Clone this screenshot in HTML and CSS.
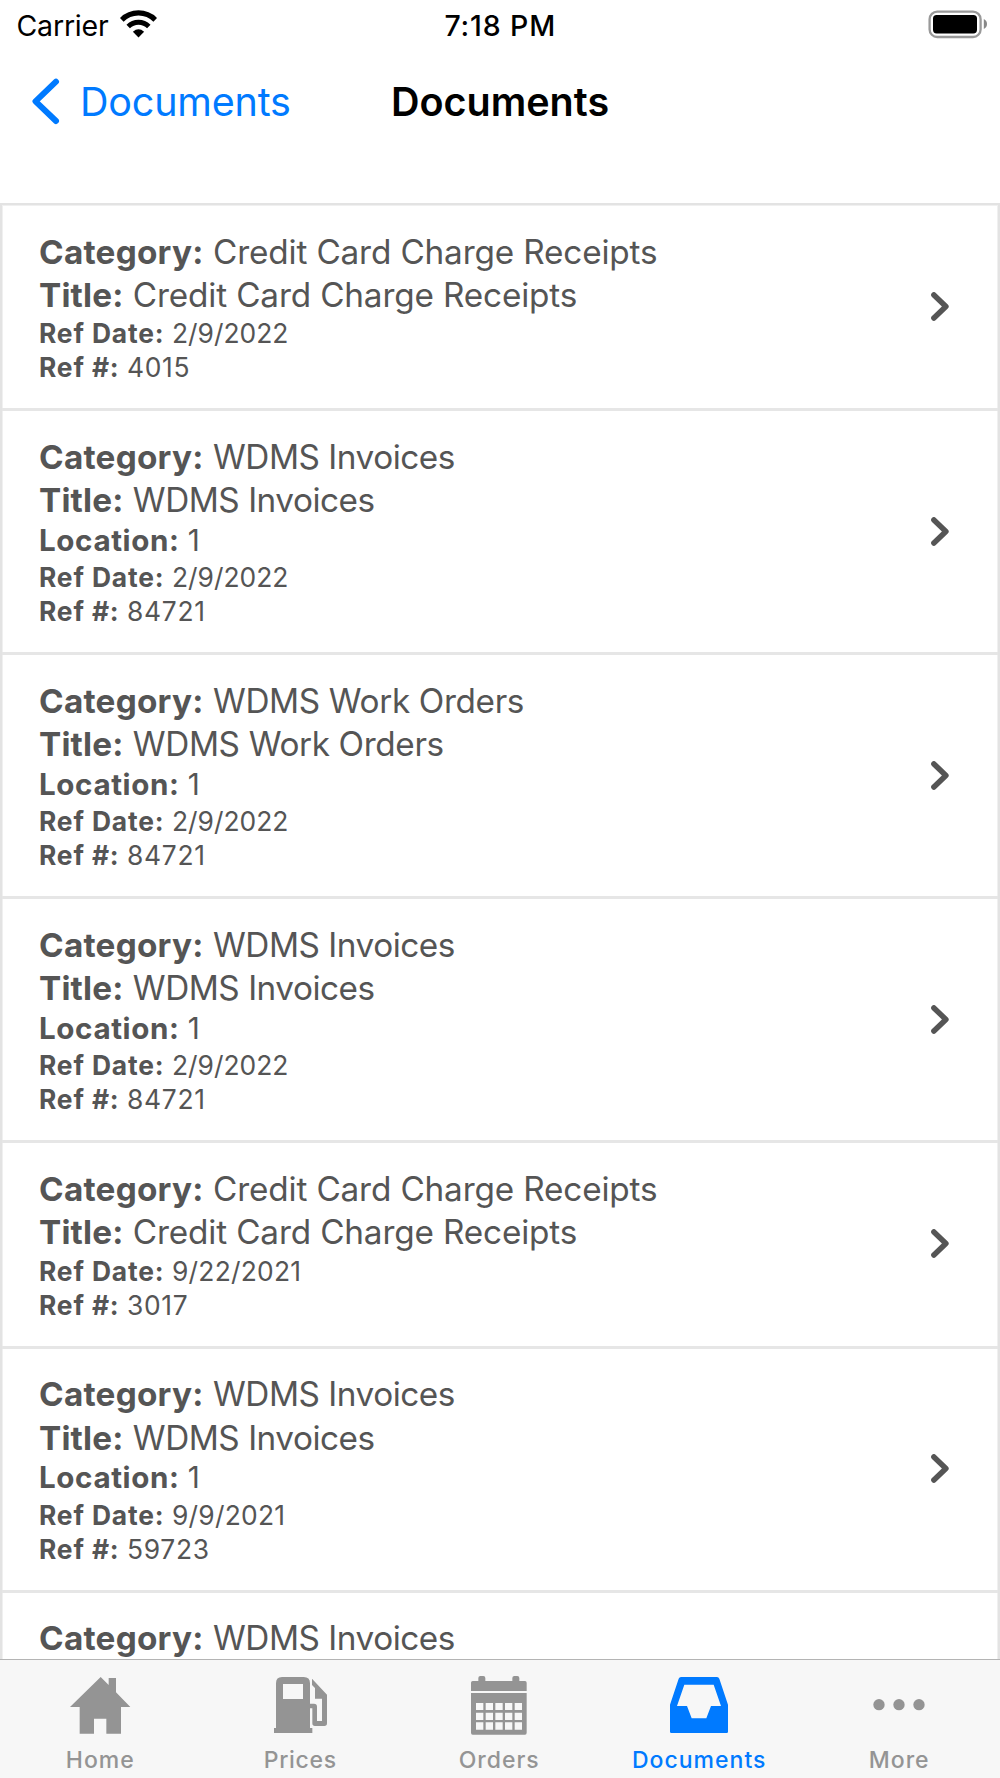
FILE: index.html
```html
<!DOCTYPE html>
<html lang="en">
<head>
<meta charset="utf-8">
<title>Documents</title>
<link rel="stylesheet" href="styles.css">
</head>
<body>
<svg class="defs" aria-hidden="true"><symbol id="chevron" viewBox="0 0 18 29"><path d="M2.9 2.9L14.9 14.4L2.9 26" fill="none" stroke="currentColor" stroke-width="5.5" stroke-linecap="round" stroke-linejoin="round"/></symbol></svg>
<div class="app">
  <header class="status">
    <div class="carrier">
      <span class="carrier-name">Carrier</span>
      <svg class="wifi" viewBox="120 8.5 37 29" width="37" height="29"><g fill="none" stroke="#000"><path d="M121.8 19.3A23.8 23.8 0 0 1 155.2 19.3" stroke-width="5.2"/><path d="M128.2 25.9A14.7 14.7 0 0 1 148.8 25.9" stroke-width="4.9"/></g><path d="M138.5 37L132.9 31.3Q138.5 26.4 144.1 31.3Z"/></svg>
    </div>
    <div class="time">7:18 PM</div>
    <svg class="battery" viewBox="928 9 60 30" width="60" height="30"><rect x="929.6" y="11.6" width="51" height="25.4" rx="7.6" fill="none" stroke="#999" stroke-width="2.3"/><rect x="933" y="15" width="44" height="18.4" rx="3.6"/><path d="M983.8 19Q987 20.6 987 24T983.8 29Z" fill="#888"/></svg>
  </header>
  <nav class="nav">
    <a class="back"><svg viewBox="32 78 28 47" width="28" height="47"><path d="M56 81.7L35.5 101.3L56 121" fill="none" stroke="currentColor" stroke-width="6" stroke-linecap="round" stroke-linejoin="round"/></svg><span>Documents</span></a>
    <h1 class="title">Documents</h1>
  </nav>
  <main class="list">
    <article class="row">
      <div class="info">
        <p class="main"><b>Category:</b> <span class="receipts">Credit Card Charge Receipts</span></p>
        <p class="main"><b class="short">Title:</b> <span class="receipts">Credit Card Charge Receipts</span></p>
        <p class="ref"><b>Ref Date:</b> <span class="date">2/9/2022</span></p>
        <p class="ref"><b>Ref #:</b> <span>4015</span></p>
      </div>
      <svg class="chev"><use href="#chevron"/></svg>
    </article>
    <article class="row">
      <div class="info">
        <p class="main"><b>Category:</b> <span>WDMS Invoices</span></p>
        <p class="main"><b class="short">Title:</b> <span>WDMS Invoices</span></p>
        <p class="loc"><b>Location:</b> <span>1</span></p>
        <p class="ref"><b>Ref Date:</b> <span class="date">2/9/2022</span></p>
        <p class="ref"><b>Ref #:</b> <span>84721</span></p>
      </div>
      <svg class="chev"><use href="#chevron"/></svg>
    </article>
    <article class="row">
      <div class="info">
        <p class="main"><b>Category:</b> <span class="orders">WDMS Work Orders</span></p>
        <p class="main"><b class="short">Title:</b> <span class="orders">WDMS Work Orders</span></p>
        <p class="loc"><b>Location:</b> <span>1</span></p>
        <p class="ref"><b>Ref Date:</b> <span class="date">2/9/2022</span></p>
        <p class="ref"><b>Ref #:</b> <span>84721</span></p>
      </div>
      <svg class="chev"><use href="#chevron"/></svg>
    </article>
    <article class="row">
      <div class="info">
        <p class="main"><b>Category:</b> <span>WDMS Invoices</span></p>
        <p class="main"><b class="short">Title:</b> <span>WDMS Invoices</span></p>
        <p class="loc"><b>Location:</b> <span>1</span></p>
        <p class="ref"><b>Ref Date:</b> <span class="date">2/9/2022</span></p>
        <p class="ref"><b>Ref #:</b> <span>84721</span></p>
      </div>
      <svg class="chev"><use href="#chevron"/></svg>
    </article>
    <article class="row">
      <div class="info">
        <p class="main"><b>Category:</b> <span class="receipts">Credit Card Charge Receipts</span></p>
        <p class="main"><b class="short">Title:</b> <span class="receipts">Credit Card Charge Receipts</span></p>
        <p class="ref"><b>Ref Date:</b> <span class="date-2021">9/22/2021</span></p>
        <p class="ref"><b>Ref #:</b> <span>3017</span></p>
      </div>
      <svg class="chev"><use href="#chevron"/></svg>
    </article>
    <article class="row">
      <div class="info">
        <p class="main"><b>Category:</b> <span>WDMS Invoices</span></p>
        <p class="main"><b class="short">Title:</b> <span>WDMS Invoices</span></p>
        <p class="loc"><b>Location:</b> <span>1</span></p>
        <p class="ref"><b>Ref Date:</b> <span class="date-2021">9/9/2021</span></p>
        <p class="ref"><b>Ref #:</b> <span>59723</span></p>
      </div>
      <svg class="chev"><use href="#chevron"/></svg>
    </article>
    <article class="row">
      <div class="info">
        <p class="main"><b>Category:</b> <span>WDMS Invoices</span></p>
      </div>
    </article>
  </main>
  <footer class="tabs">
    <a class="tab"><svg viewBox="192 282 216 192"><path d="M302 291L326 315V294H348V337L391 381H363V461H319V416H282V461H239V381H210Z"/></svg><span>Home</span></a>
    <a class="tab"><svg viewBox="792 282 216 192"><path fill-rule="evenodd" d="M828 310Q828 291 846 291H911Q930 291 930 310V371H942Q951 371 951 380V423H966V356H945V324L936 315V296L981 344V430Q981 438 973 438H945Q937 438 937 430V385H930V444H937V459H822V444H828ZM849 312V357H909V312Z"/></svg><span class="prices">Prices</span></a>
    <a class="tab"><svg viewBox="342 282 216 192"><path fill-rule="evenodd" d="M363 333V308Q363 303 368 303H385V294Q385 288 391 288H400Q406 288 406 294V303H487V294Q487 288 493 288H502Q508 288 508 294V303H525Q530 303 530 308V333ZM363 339H530V458Q530 464 525 464H368Q363 464 363 458ZM378 369V390H400V369ZM407 369V390H429V369ZM436 369V390H458V369ZM465 369V390H487V369ZM494 369V390H516V369ZM378 398V420H400V398ZM407 398V420H429V398ZM436 398V420H458V398ZM465 398V420H487V398ZM494 398V420H516V398ZM378 427V449H400V427ZM407 427V449H429V427ZM436 427V449H458V427ZM465 427V449H487V427ZM494 427V449H516V427Z"/></svg><span class="offset">Orders</span></a>
    <a class="tab active"><svg viewBox="192 282 216 192"><path fill-rule="evenodd" d="M243 291H351Q356 291 358 296L384 374V455Q384 459 380 459H214Q210 459 210 455V374L236 296Q238 291 243 291ZM253 314L231 378H261L275 415H319L333 378H363L341 314Z"/></svg><span class="offset">Documents</span></a>
    <a class="tab"><svg viewBox="792 282 216 192"><circle cx="837" cy="374" r="17"/><circle cx="897" cy="374" r="17"/><circle cx="957" cy="374" r="17"/></svg><span class="offset">More</span></a>
  </footer>
</div>
</body>
</html>
```
FILE: styles.css
```css
* { box-sizing: border-box; }
body { margin: 0; background: #fff; font-family: Inter, "Liberation Sans", sans-serif; }
.defs { display: none; }
.app { display: flex; flex-direction: column; width: 1000px; height: 1778px; overflow: hidden; }

.status { display: grid; grid-template-columns: 1fr auto 1fr; align-items: start; height: 56px; padding: 9px 12px 0 16.5px; font-size: 28.5px; line-height: 33px; }
.carrier { display: flex; gap: 11px; }
.carrier-name { letter-spacing: -.2px; }
.time { font-weight: 500; letter-spacing: .85px; margin-right: 4px; }
.battery { justify-self: end; }

.nav { display: grid; grid-template-columns: 1fr auto 1fr; align-items: center; height: 92px; padding: 0 32px; font-size: 39.5px; line-height: 48px; }
.back { display: flex; align-items: center; gap: 20px; color: #007aff; letter-spacing: -.2px; }
.back svg { margin-bottom: 2px; }
.title { margin: 0; font-size: inherit; font-weight: 600; }

.list { flex: 1; min-height: 0; margin-top: 55px; overflow: hidden; border: 2px solid #e3e3e3; border-bottom: 0; box-shadow: inset 1px 1px #f0f0f0, inset -1px 0 #f0f0f0; }
.row { display: flex; justify-content: space-between; align-items: center; padding: 25.9px 49px 24px 37px; color: #555; }
.row + .row { border-top: 3px solid #e6e6e6; padding-top: 24.9px; }
.info p { margin: 0; white-space: nowrap; }
.main { font-size: 33.3px; line-height: 43.3px; }
.main b { letter-spacing: .25px; }
.main .short { letter-spacing: .15px; }
.main span { letter-spacing: -.46px; }
.main .orders { letter-spacing: -.36px; }
.main .receipts { letter-spacing: -.15px; }
.info .main + .loc, .info .main + .ref { margin-top: -1.2px; }
.loc { font-size: 29.6px; line-height: 37.1px; padding-bottom: 1.6px; }
.loc b { letter-spacing: .6px; }
.ref { font-size: 26.4px; line-height: 34px; }
.ref b { letter-spacing: .85px; }
.ref span { letter-spacing: .7px; }
.ref .date { letter-spacing: 0; }
.ref .date-2021 { letter-spacing: .25px; }
.chev { width: 18px; height: 29px; margin-bottom: 2px; }

.tabs { display: grid; grid-template-columns: repeat(5, 1fr); height: 119px; border-top: 1px solid #b4b4b4; background: #f7f7f7; color: #949494; }
.tab { display: flex; flex-direction: column; align-items: center; padding-top: 14px; font-size: 23px; font-weight: 500; line-height: 28px; letter-spacing: 1px; }
.tab svg { width: 72px; height: 64px; fill: currentColor; }
.tab span { margin-top: 8px; margin-right: -.5px; }
.tab .prices { letter-spacing: .7px; }
.tab .offset { margin-right: 1.6px; }
.active { color: #007aff; }
```
